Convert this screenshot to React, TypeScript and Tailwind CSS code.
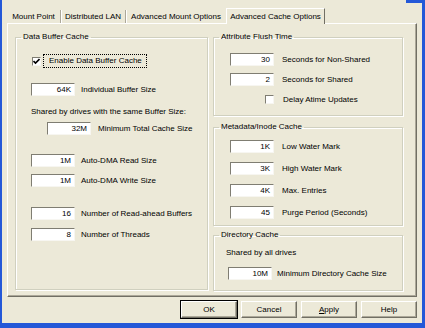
import React from 'react';

type FieldProps = { value: string; label: string; gap?: string; className?: string };

function NumBox({ value }: { value: string }) {
  return (
    <div className="w-[44px] h-[13px] shrink-0 bg-white border border-t-[#7f7d72] border-l-[#7f7d72] border-r-[#f7f6f1] border-b-[#f7f6f1] text-right pr-[3px] leading-[11px]">
      {value}
    </div>
  );
}

function Field({ value, label, gap = 'gap-[6px]', className = '' }: FieldProps) {
  return (
    <div className={`flex items-center ${gap} ${className}`}>
      <NumBox value={value} />
      <span className="leading-[10px] whitespace-nowrap">{label}</span>
    </div>
  );
}

function CheckBox({ checked }: { checked?: boolean }) {
  return (
    <div className="w-[9px] h-[9px] shrink-0 bg-white border border-t-[#7f7d72] border-l-[#7f7d72] border-r-[#f7f6f1] border-b-[#f7f6f1] flex items-center justify-center">
      {checked && (
        <svg width="7" height="7" viewBox="0 0 7 7">
          <path d="M0.5 3 L2.5 5 L6.5 1" stroke="#000" strokeWidth="1.6" fill="none" />
        </svg>
      )}
    </div>
  );
}

function Group({ title, className = '', children }: { title: string; className?: string; children: React.ReactNode }) {
  return (
    <fieldset className={`border border-[#d0d0bf] shadow-[inset_1px_1px_0_#fff,1px_1px_0_#fff] min-w-0 ${className}`}>
      <legend className="ml-[5px] px-[2px] leading-[10px] whitespace-nowrap">{title}</legend>
      {children}
    </fieldset>
  );
}

const tabs = [
  { name: 'Mount Point', w: 'w-[54px]', sep: true },
  { name: 'Distributed LAN', w: 'w-[65px]', sep: true },
  { name: 'Advanced Mount Options', w: 'w-[100px]', sep: false },
];

function Btn({ children, primary }: { children: React.ReactNode; primary?: boolean }) {
  return (
    <button
      className={`w-[56px] h-[17px] bg-[#ece9d8] border border-t-white border-l-white border-r-[#716f64] border-b-[#716f64] shadow-[inset_-1px_-1px_0_#aca899] leading-[14px] ${
        primary ? 'outline outline-1 outline-black' : ''
      }`}
    >
      {children}
    </button>
  );
}

export default function App() {
  return (
    <div className="relative w-[425px] h-[328px] bg-[#ece9d8] border-l-2 border-r-[3px] border-b-[5px] border-[#2458d8] flex flex-col font-['Liberation_Sans',Arial,sans-serif] text-[8px] text-black">
      <div className="absolute right-[-3px] top-0 w-[19px] h-[3px] bg-[#2458d8]" />

      {/* Tabs */}
      <div className="ml-[5px] mt-[8px] h-[15px] flex items-end">
        {tabs.map(t => (
          <div
            key={t.name}
            className={`${t.w} h-[13px] flex items-center justify-center whitespace-nowrap ${
              t.sep ? 'border-r border-[#aca899] shadow-[1px_0_0_#fff]' : ''
            }`}
          >
            {t.name}
          </div>
        ))}
        <div className="relative z-10 -mb-px w-[99px] h-[16px] bg-[#ece9d8] border-t border-l border-r border-t-white border-l-white border-r-[#716f64] flex items-center justify-center whitespace-nowrap">
          Advanced Cache Options
        </div>
      </div>

      {/* Panel */}
      <div className="ml-[5px] w-[410px] h-[274px] border border-t-white border-l-white border-r-[#716f64] border-b-[#716f64] shadow-[inset_-1px_-1px_0_#aca899] pl-[7px] pt-[8px] flex gap-[5px]">
        <Group title="Data Buffer Cache" className="w-[193px] h-[258px]">
          <div className="pl-[15px] flex flex-col items-start">
            <div className="mt-[12px] h-[14px] flex items-center">
              <div className="ml-px">
                <CheckBox checked />
              </div>
              <div className="ml-[2px] h-[14px] border border-dotted border-black pl-[5px] pr-[4px] flex items-center whitespace-nowrap">
                Enable Data Buffer Cache
              </div>
            </div>
            <Field className="mt-[15px]" value="64K" label="Individual Buffer Size" />
            <div className="mt-[11px] leading-[10px] whitespace-nowrap">Shared by drives with the same Buffer Size:</div>
            <Field className="mt-[5px] ml-[16px]" gap="gap-[7px]" value="32M" label="Minimum Total Cache Size" />
            <Field className="mt-[19px]" value="1M" label="Auto-DMA Read Size" />
            <Field className="mt-[7px]" value="1M" label="Auto-DMA Write Size" />
            <Field className="mt-[20px]" value="16" label="Number of Read-ahead Buffers" />
            <Field className="mt-[8px]" value="8" label="Number of Threads" />
          </div>
        </Group>

        <div className="w-[190px] flex flex-col">
          <Group title="Attribute Flush Time" className="h-[84px]">
            <div className="pl-[16px] flex flex-col items-start">
              <Field className="mt-[11px]" gap="gap-[8px]" value="30" label="Seconds for Non-Shared" />
              <Field className="mt-[7px]" gap="gap-[8px]" value="2" label="Seconds for Shared" />
              <div className="mt-[7px] h-[13px] flex items-center gap-[9px] pl-[35px]">
                <CheckBox />
                <span className="leading-[10px] whitespace-nowrap">Delay Atime Updates</span>
              </div>
            </div>
          </Group>

          <Group title="Metadata/Inode Cache" className="mt-[6px] h-[104px]">
            <div className="pl-[16px] flex flex-col items-start">
              <Field className="mt-[8px]" gap="gap-[8px]" value="1K" label="Low Water Mark" />
              <Field className="mt-[9px]" gap="gap-[8px]" value="3K" label="High Water Mark" />
              <Field className="mt-[9px]" gap="gap-[8px]" value="4K" label="Max. Entries" />
              <Field className="mt-[9px]" gap="gap-[8px]" value="45" label="Purge Period (Seconds)" />
            </div>
          </Group>

          <Group title="Directory Cache" className="mt-[4px] h-[61px]">
            <div className="flex flex-col items-start">
              <div className="mt-[8px] pl-[12px] leading-[10px] whitespace-nowrap">Shared by all drives</div>
              <Field className="mt-[9px] pl-[14px]" gap="gap-[5px]" value="10M" label="Minimum Directory Cache Size" />
            </div>
          </Group>
        </div>
      </div>

      {/* Buttons */}
      <div className="mt-[4px] pr-[5px] flex justify-end gap-[4px]">
        <Btn primary>OK</Btn>
        <Btn>Cancel</Btn>
        <Btn>
          <span className="underline">A</span>pply
        </Btn>
        <Btn>Help</Btn>
      </div>
    </div>
  );
}
